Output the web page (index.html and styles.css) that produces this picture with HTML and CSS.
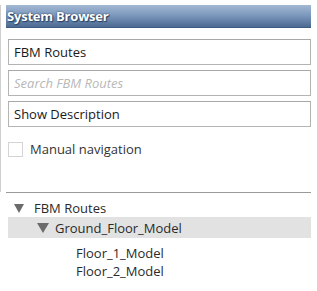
FILE: index.html
```html
<!DOCTYPE html>
<html>
<head>
<meta charset="utf-8">
<link rel="stylesheet" href="styles.css">
</head>
<body>
<div class="panel">
  <div class="upper">
    <div class="header">System Browser</div>
    <div class="field">FBM Routes</div>
    <div class="field placeholder">Search FBM Routes</div>
    <div class="field">Show Description</div>
    <label class="check"><span class="box"></span><span>Manual navigation</span></label>
  </div>
  <div class="tree">
    <div class="row lvl0"><span class="tri"></span><span>FBM Routes</span></div>
    <div class="row lvl1 selected"><span class="tri"></span><span>Ground_Floor_Model</span></div>
    <div class="row lvl2 first"><span>Floor_1_Model</span></div>
    <div class="row lvl2"><span>Floor_2_Model</span></div>
  </div>
</div>
</body>
</html>
```
FILE: styles.css
```css
html, body {
  margin: 0;
  padding: 0;
  background: #fff;
}
body {
  font-family: "Open Sans", "Noto Sans", sans-serif;
  font-size: 13px;
  color: #222;
  width: 317px;
  height: 291px;
  overflow: hidden;
}
.panel {
  padding-top: 5px;
}
.upper {
  border-left: 1px solid #cfcfcf;
  padding-left: 5px;
  width: 305px;
  padding-bottom: 34px;
}
.header {
  height: 23px;
  box-sizing: border-box;
  padding-left: 1px;
  line-height: 22px;
  font-weight: bold;
  font-size: 13px;
  letter-spacing: -0.2px;
  color: #fff;
  text-shadow: 0 0 2px #1d3557, 1px 1px 1px #2a4468;
  background: linear-gradient(#a3b9d4, #7d99bd 45%, #4c6a92);
  border-bottom: 1px solid #3f5b82;
}
.field {
  margin: 11px 0 0 2px;
  height: 26px;
  box-sizing: border-box;
  border: 1px solid #b4b4b4;
  border-top-color: #a8a8a8;
  padding-left: 5px;
  line-height: 24px;
  font-size: 13px;
  color: #1a1a1a;
}
.field + .field {
  margin-top: 5px;
}
.field.placeholder {
  color: #b8b8b8;
  font-style: italic;
}
.check {
  display: flex;
  align-items: center;
  gap: 7px;
  margin: 13px 0 0 2px;
  font-size: 13px;
  color: #333;
}
.check .box {
  width: 15px;
  height: 15px;
  box-sizing: border-box;
  border: 1px solid #d4d4d4;
  background: #fff;
}
.tree {
  margin-left: 6px;
  width: 305px;
  border-top: 1px solid #9a9a9a;
  padding-top: 6px;
  color: #2a2a2a;
}
.row {
  display: flex;
  align-items: center;
  height: 20px;
}
.row.lvl0 { padding-left: 8px; height: 18px; }
.row.lvl1 { padding-left: 29px; margin-left: 2px; height: 21px; }
.row.lvl2 { padding-left: 70px; height: 18px; }
.row.lvl2.first { margin-top: 6px; }
.selected { background: #e2e2e2; }
.tri {
  width: 0;
  height: 0;
  border-left: 5px solid transparent;
  border-right: 5px solid transparent;
  border-top: 9px solid #6b6b6b;
  margin-right: 10px;
}
.lvl1 .tri { margin-right: 6px; border-left-width: 6px; border-right-width: 6px; border-top-width: 10px; }
```
